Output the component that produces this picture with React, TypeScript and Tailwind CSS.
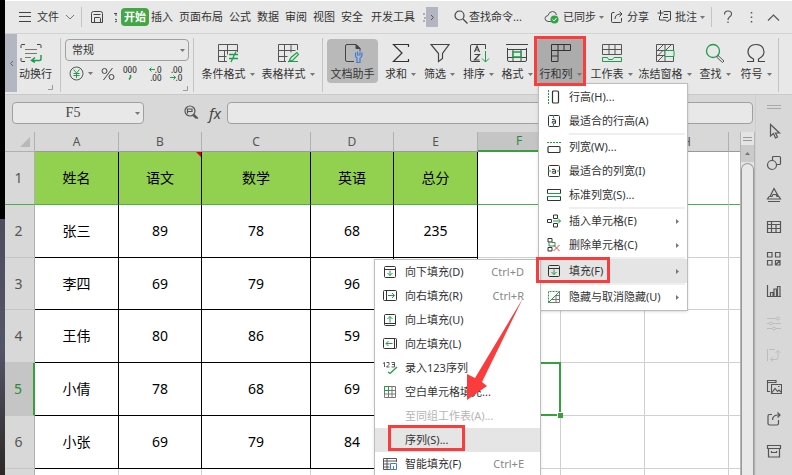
import { ReactNode } from 'react';

interface IconProps {
  children: ReactNode;
  w?: number;
  h?: number;
  className?: string;
}

// Stroke icon drawn one unit per pixel
function Icon({ children, w = 16, h = 16, className = '' }: IconProps) {
  return (
    <svg
      width={w}
      height={h}
      viewBox={`0 0 ${w} ${h}`}
      fill="none"
      stroke="currentColor"
      strokeWidth="1"
      className={`shrink-0 ${className}`}
      aria-hidden="true"
    >
      {children}
    </svg>
  );
}

const G = '#1e9e4a';

function Caret() {
  return (
    <svg width="5" height="3" viewBox="0 0 5 3" className="shrink-0 fill-[#777]" aria-hidden="true">
      <path d="M0 0h5L2.500 3z" />
    </svg>
  );
}

const icons = {
  wrap: (
    <Icon w={24} h={20} className="text-[#444]">
      <path d="M2 5V2.500q0-1 1-1h3M18 1.500h3q1 0 1 1V5M2 15v2.500q0 1 1 1h3" />
      <path d="M6 6.500h12M6 10.500h12M6 14.500h6" stroke="#777" />
      <path d="M22 12v4q0 1.500-1.500 1.500H13M16 14.500l-3.500 3 3.500 2" stroke={G} strokeWidth="1.500" />
    </Icon>
  ),
  condition: (
    <Icon w={22} h={20} className="text-[#555]">
      <path d="M10 18.500H1.500V1.500h19V9M1.500 7.500h19M10.500 1.500v10M1.500 13.500h8M7.500 7.500v11" />
      <path d="M12 11.500h9M12 15.500h9M19 8.500l-5 10.500" stroke={G} strokeWidth="1.300" />
    </Icon>
  ),
  tableStyle: (
    <Icon w={22} h={20} className="text-[#555]">
      <path d="M9 18.500H1.500V1.500h19V7M1.500 7.500h17M7.500 1.500v17M14 1.500v8M1.500 13.500h9" />
      <path d="M12 18.500l2-4 6-5 1.500 2-5.500 5.500zM11 18.500h10" stroke={G} strokeWidth="1.200" />
    </Icon>
  ),
  docHelper: (
    <Icon w={20} h={20} className="text-[#444]">
      <path d="M11 18.500H4Q2.500 18.500 2.500 17V3Q2.500 1.500 4 1.500h9l4 4V8" />
      <path d="M13 1.500v4h4z" fill="#444" />
      <path d="M12.500 9.500v3q0 1.500 1.500 2.500v4.500h3V15q2-1 2-3V9.500M14.500 8.500v3.500h2.500V8.500" stroke="#3f7bdc" strokeWidth="1.200" />
    </Icon>
  ),
  sum: (
    <Icon w={20} h={20} className="text-[#333]">
      <path d="M17.500 4V1.500H2.500L11 10l-8.500 8.500h15V16" strokeWidth="1.200" />
    </Icon>
  ),
  filter: (
    <Icon w={20} h={20} className="text-[#444]">
      <path d="M1 1.500h18l-6.500 9v5l-4 3v-8z" strokeWidth="1.200" />
    </Icon>
  ),
  sort: (
    <Icon w={22} h={20} className="text-[#444]">
      <path d="M12 18.500H4Q2.500 18.500 2.500 17V3Q2.500 1.500 4 1.500h13.500V6" />
      <path d="M6.500 9l2.500-6 2.500 6M7.500 7h3.500M6.500 11.500h5l-5 5.500h5" strokeWidth="1.200" />
      <path d="M17.500 8v11M14 15.500l3.500 3.500 3.500-3.500" stroke={G} />
    </Icon>
  ),
  format: (
    <Icon w={22} h={20} className="text-[#444]">
      <path d="M0 1.500h22M1.500 5v12q0 1.500 1.500 1.500h16q1.500 0 1.500-1.500V5M1.500 6.500h19M7 6v12.500M15 6v12.500M1.500 14.500h19" />
      <rect x="7" y="9" width="8" height="5" fill="#e8e8e8" stroke={G} strokeWidth="1.500" />
    </Icon>
  ),
  rowsCols: (
    <Icon w={20} h={20} className="text-[#333]">
      <path d="M.5 1.500h19v6H7v11H.5zM.5 7.500H7V1.500M.5 13h6.500M13 1.500v6" />
    </Icon>
  ),
  worksheet: (
    <Icon w={20} h={20} className="text-[#555]">
      <path d="M.5 11.500v-10h19v10zM.5 6.500h19M7 1.500v10M13 1.500v10" />
      <path d="M.5 14.500v4h19v-4H12l-1.500 2h-4l-1-2z" stroke={G} />
    </Icon>
  ),
  freeze: (
    <Icon w={20} h={20} className="text-[#555]">
      <path d="M1.500 1.500h17v17h-17zM1.500 7.500h17M1.500 12.500h17M10 1.500v17M3 7l5-5M11 7l5-5M3 12.500l5-5M3 18l5-5" />
      <path d="M10 7.500h9v6h-9z" fill="#e8e8e8" stroke={G} />
    </Icon>
  ),
  find: (
    <Icon w={20} h={20}>
      <circle cx="8" cy="8" r="6.500" stroke={G} strokeWidth="1.300" />
      <path d="M13 12.500l6 5.500-1.500 1.500-6-5.500z" stroke="#555" />
    </Icon>
  ),
  symbol: (
    <Icon w={20} h={20} className="text-[#444]">
      <path d="M1 18.500h6.500V16C3.500 14 2 12 2 9q.5-7.500 8-7.500T18 9c0 3-1.500 5-5.500 7v2.500H19" strokeWidth="1.200" />
    </Icon>
  ),
};

interface RibbonButtonProps {
  icon: ReactNode;
  label: string;
  className: string;
  caret?: boolean;
}

function RibbonButton({ icon, label, className, caret = true }: RibbonButtonProps) {
  return (
    <button className={`h-11 shrink-0 flex flex-col items-center gap-[3px] pt-1 rounded-sm ${className}`}>
      {icon}
      <span className="flex items-center gap-1 leading-4 whitespace-nowrap">
        {label}
        {caret && <Caret />}
      </span>
    </button>
  );
}

function Divider({ className = '' }: { className?: string }) {
  return <span className={`w-px shrink-0 bg-[#c4c4c4] ${className}`} />;
}

const tabs = ['插入', '页面布局', '公式', '数据', '审阅', '视图', '安全'];

function TabBar() {
  return (
    <div className="h-[34px] flex items-center border-t border-t-white border-b border-b-[#d2d2d2] pl-3.5 pr-3 whitespace-nowrap">
      <button className="flex items-center gap-1.5">
        <Icon w={12} h={12} className="text-[#444]">
          <path d="M0 1.500h12M0 5.500h12M0 10.500h12" />
        </Icon>
        文件
        <Icon w={10} h={8} className="text-[#777]">
          <path d="M1 2l4 4 4-4" />
        </Icon>
      </button>
      <Divider className="h-5 ml-1.5" />
      <button aria-label="保存" className="ml-2">
        <Icon w={14} h={14} className="text-[#444]">
          <path d="M1.500 12.500v-9q0-2 2-2h7q2 0 2 2v9zM3.500 4.500h7M4.500 12V7.500h5q1 0 1 1V12" />
        </Icon>
      </button>
      <Icon w={3} h={14} className="ml-2.5 text-[#444]">
        <path d="M0 3.500h3M2 4v2M1 9l2 1M1 12l2-1" />
      </Icon>
      <button className="ml-1 h-[18px] px-[3px] rounded bg-[#43a745] text-white font-bold leading-4">开始</button>
      <nav className="flex gap-1.5 ml-0.5">
        {tabs.map((tab) => (
          <button key={tab}>{tab}</button>
        ))}
        <button className="ml-0.5">开发工具</button>
      </nav>
      <Icon w={3} h={14} className="ml-2 text-[#777]">
        <path d="M0 4h2M1 8h2M0 11h2" />
      </Icon>
      <button aria-label="更多选项卡" className="w-3 h-5 bg-[#b3b6c0] flex items-center justify-center">
        <Icon w={5} h={7} className="text-[#555]">
          <path d="M1 1l2.500 2.500L1 6" />
        </Icon>
      </button>
      <button className="flex items-center gap-px ml-4">
        <Icon w={14} h={14} className="text-[#444]">
          <circle cx="5.500" cy="5.500" r="4.500" strokeWidth="1.200" />
          <path d="M9 9l4.500 4.500" strokeWidth="1.300" />
        </Icon>
        查找命令...
      </button>
      <div className="flex-1" />
      <button className="flex items-center gap-[3px]">
        <Icon w={16} h={14} className="text-[#555]">
          <path d="M7 11.500H4Q1 11 1 8.500 1 6 4 5.500 5 1.500 8.500 1.500q3.500 0 4 3.500" />
          <circle cx="10.500" cy="9.500" r="4" fill="#2fa644" stroke="none" />
          <path d="M8.500 9.500l1.500 1.500 2.500-3" stroke="#fff" />
        </Icon>
        已同步
        <Caret />
      </button>
      <button className="flex items-center gap-1 ml-1.5">
        <Icon w={13} h={13} className="text-[#444]">
          <path d="M4.500 1.500H3q-1.500 0-1.500 1.500v7.500q0 1 1 1h8q1 0 1-1V7M5 8q0-4.500 5-5h2M9.500.5L12 3 9.500 5.500" />
        </Icon>
        分享
      </button>
      <button className="flex items-center gap-[3px] ml-2">
        <Icon w={15} h={14} className="text-[#444]">
          <path d="M6.500 1.500h7v8.500h-2l-1 2-2-2h-6V6M7 4.500h4M6 7.500h5M3.500 0v6M.5 3h6" />
        </Icon>
        批注
        <Caret />
      </button>
      <Divider className="h-5 ml-1.5" />
      <button aria-label="帮助" className="ml-2.5">
        <Icon w={12} h={14} className="text-[#555]">
          <path d="M2.500 4.500Q2.500 1 6 1t3.500 3Q9.500 6 7.500 7 6 8 6 10M6 11.500V13" strokeWidth="1.200" />
        </Icon>
      </button>
      <button aria-label="更多" className="ml-4">
        <Icon w={3} h={13}>
          <path d="M1.500 1v1.500M1.500 5.500V7M1.500 10v1.500" stroke="#555" strokeWidth="1.500" />
        </Icon>
      </button>
      <button aria-label="收起功能区" className="ml-3.5">
        <Icon w={13} h={9} className="text-[#555]">
          <path d="M1 7.500L6.500 2 12 7.500" strokeWidth="1.200" />
        </Icon>
      </button>
    </div>
  );
}

function Corner() {
  return (
    <Icon w={6} h={6} className="self-end text-[#999]">
      <path d="M4.500 0v4.500H0" />
    </Icon>
  );
}

function NumberGroup() {
  return (
    <div className="w-[124px] shrink-0 flex flex-col ml-1 pt-[5px]">
      <div className="relative">
        <select
          aria-label="数字格式"
          className="appearance-none block w-full h-[22px] rounded border border-[#a0a0a0] bg-[#e8e8e8] pl-1.5 leading-4 outline-none"
        >
          <option>常规</option>
        </select>
        <span className="absolute right-1 top-2.5">
          <Caret />
        </span>
      </div>
      <div className="flex items-center h-[25px] pl-1">
        <button aria-label="货币格式" className="flex items-center gap-1">
          <Icon w={15} h={15} className="text-[#555]">
            <circle cx="7.500" cy="7.500" r="6.500" />
            <path d="M4.500 3.500l3 3.500 3-3.500M7.500 7v5M4.500 7.500h6M4.500 9.500h6" stroke={G} />
          </Icon>
          <Caret />
        </button>
        <button aria-label="百分比" className="ml-2">
          <Icon w={14} h={14} className="text-[#444]">
            <circle cx="3.500" cy="4" r="2.500" />
            <circle cx="10.500" cy="10" r="2.500" />
            <path d="M11.500 1l-9 12" />
          </Icon>
        </button>
        <button className="ml-2 flex flex-col items-center text-[8px] leading-2 font-medium">
          000
          <Icon w={4} h={7} className="text-[#1e9e4a]">
            <path d="M2.500 1v2.500L1 5.500" strokeWidth="1.500" />
          </Icon>
        </button>
        <button className="ml-3 flex flex-col items-end text-[8px] leading-2 font-medium">
          <span className="flex items-center">
            <Icon w={6} h={5} className="text-[#1e9e4a]">
              <path d="M0 2.500h6M2.500.5l-2 2 2 2" />
            </Icon>
            .0
          </span>
          <span>.00</span>
        </button>
        <button className="ml-2 flex flex-col items-end text-[8px] leading-2 font-medium">
          <span>.00</span>
          <span className="flex items-center">
            <Icon w={6} h={5} className="text-[#1e9e4a]">
              <path d="M0 2.500h6M3.500.5l2 2-2 2" />
            </Icon>
            .0
          </span>
        </button>
      </div>
      <Corner />
    </div>
  );
}

interface MenuEntry {
  label: string;
  icon?: ReactNode;
  shortcut?: string;
  arrow?: boolean;
  active?: boolean;
  disabled?: boolean;
}

const fillMenu: MenuEntry[] = [
  {
    label: '向下填充(D)',
    shortcut: 'Ctrl+D',
    icon: (
      <Icon w={14} h={14}>
        <rect x="1.500" y="1.500" width="11" height="11" rx="1" />
        <path d="M1.500 4.500h11" />
        <path d="M7 5.500v5M4.500 8L7 10.500 9.500 8" stroke={G} />
      </Icon>
    ),
  },
  {
    label: '向右填充(R)',
    shortcut: 'Ctrl+R',
    icon: (
      <Icon w={14} h={14}>
        <rect x=".5" y="1.500" width="13" height="10" rx="1" />
        <path d="M3.500 1.500v10" />
        <path d="M5 6.500h6.500M9 4l2.500 2.500L9 9" stroke={G} />
      </Icon>
    ),
  },
  {
    label: '向上填充(U)',
    icon: (
      <Icon w={14} h={14}>
        <rect x="1.500" y="1.500" width="11" height="11" rx="1" />
        <path d="M1.500 10.500h11" />
        <path d="M7 9.500v-6M4.500 6L7 3.500 9.500 6" stroke={G} />
      </Icon>
    ),
  },
  {
    label: '向左填充(L)',
    icon: (
      <Icon w={14} h={14}>
        <rect x=".5" y="1.500" width="13" height="10" rx="1" />
        <path d="M11.500 1.500v10" />
        <path d="M9.500 6.500H3M5.500 4L3 6.500 5.500 9" stroke={G} />
      </Icon>
    ),
  },
  {
    label: '录入123序列',
    icon: (
      <Icon w={16} h={14}>
        <path d="M0 2.500l1.500-1v4.500M3.500 1.500h2.500v2L3.500 6H6.500M8.500 1.500h3v4.500h-3M9 3.500h2.500" strokeWidth=".8" />
        <path d="M7 12.500l7-6.500M7 12.500l-2-1.500" stroke={G} strokeWidth="1.300" />
      </Icon>
    ),
  },
  {
    label: '空白单元格填充...',
    icon: (
      <Icon w={14} h={14} className="text-[#777]">
        <path d="M1.500 1.500h11v11h-11zM1.500 5.500h11M1.500 9h11M5.500 1.500v11M9 1.500v11" />
        <path d="M1.500 1.500h4v4h-4z" stroke={G} />
      </Icon>
    ),
  },
  { label: '至同组工作表(A)...', disabled: true },
  { label: '序列(S)...', active: true },
  {
    label: '智能填充(F)',
    shortcut: 'Ctrl+E',
    icon: (
      <Icon w={14} h={14} className="text-[#555]">
        <path d="M7 12.500H.5v-11h13V5M.5 4h13M.5 7h6M.5 10h6M4 1.500v11" />
        <path d="M7.500 6.500h6v6h-6zM10.500 9v3.500" stroke="#3f7bdc" />
      </Icon>
    ),
  },
];

const rowColMenu: MenuEntry[][] = [
  [
    {
      label: '行高(H)...',
      icon: (
        <Icon w={14} h={14}>
          <path d="M1.500 0v14" stroke={G} strokeDasharray="2 1" />
          <rect x="5.500" y="1" width="6" height="12" rx="1" strokeWidth="1.200" />
        </Icon>
      ),
    },
    {
      label: '最适合的行高(A)',
      icon: (
        <Icon w={14} h={14}>
          <rect x="1.500" y="1.500" width="11" height="11" rx="1" />
          <path d="M5 5.500q3.500-1 3.500 1V9.500M8.500 7q-4 0-3.500 1.500T8.500 9" />
          <path d="M6.500 1v3M6.500 10v3" stroke={G} />
        </Icon>
      ),
    },
  ],
  [
    {
      label: '列宽(W)...',
      icon: (
        <Icon w={14} h={14}>
          <path d="M0 2.500h14" stroke={G} strokeDasharray="2 1" />
          <rect x="1" y="6.500" width="12" height="6" rx="1" strokeWidth="1.200" />
        </Icon>
      ),
    },
    {
      label: '最适合的列宽(I)',
      icon: (
        <Icon w={14} h={14}>
          <rect x="1.500" y="1.500" width="11" height="11" rx="1" />
          <path d="M5 5.500q3.500-1 3.500 1V9.500M8.500 7q-4 0-3.500 1.500T8.500 9" />
          <path d="M1 7h3M10 7h3" stroke={G} />
        </Icon>
      ),
    },
    {
      label: '标准列宽(S)...',
      icon: (
        <Icon w={14} h={14}>
          <path d="M.5 5.500v-4h13v4M.5 8.500v4h13v-4" />
          <path d="M0 5.500h14M0 8.500h14" stroke={G} />
        </Icon>
      ),
    },
  ],
  [
    {
      label: '插入单元格(E)',
      arrow: true,
      icon: (
        <Icon w={14} h={14}>
          <path d="M.5 5.500h4v3h-4zM6.500 1h4v3.500h-4zM6.500 9.500h4V13h-4z" />
          <path d="M6 7h7.500M11 4.500L13.500 7 11 9.500" stroke={G} />
        </Icon>
      ),
    },
    {
      label: '删除单元格(C)',
      arrow: true,
      icon: (
        <Icon w={14} h={14}>
          <path d="M1 .5h4V4H1zM1 9.500h4V13H1z" />
          <path d="M2 4v4h6V4.500H5" stroke={G} />
          <path d="M6.500 7l6 6M12.500 7l-6 6" stroke="#e0443e" />
        </Icon>
      ),
    },
  ],
  [
    {
      label: '填充(F)',
      arrow: true,
      active: true,
      icon: (
        <Icon w={14} h={14}>
          <rect x="1.500" y="1.500" width="11" height="11" rx="1" />
          <path d="M1.500 4.500h11" />
          <path d="M7 5.500v5M4.500 8L7 10.500 9.500 8" stroke={G} />
        </Icon>
      ),
    },
  ],
  [
    {
      label: '隐藏与取消隐藏(U)',
      arrow: true,
      icon: (
        <Icon w={14} h={14} className="text-[#777]">
          <path d="M12.500 1.500v11h-11M9 12.500V5M4 9.500h8.500M8 5.500h4.500" />
          <path d="M1.500 12.500v-11h11" stroke={G} strokeDasharray="2 1" />
          <path d="M1.500 12.500l11-11" stroke={G} />
        </Icon>
      ),
    },
  ],
];

function MenuRow({ entry }: { entry: MenuEntry }) {
  return (
    <button
      disabled={entry.disabled}
      className={`w-full h-6 flex items-center pl-2 pr-2 text-left whitespace-nowrap ${
        entry.active ? 'bg-[#e5e5e5]' : ''
      } ${entry.disabled ? 'text-[#b5b5b5]' : 'text-[#333]'}`}
    >
      <span className="w-[22px] shrink-0">{entry.icon}</span>
      <span className="flex-1">{entry.label}</span>
      {entry.shortcut && <span className="pr-2 text-[#888]">{entry.shortcut}</span>}
      {entry.arrow && (
        <svg width="3" height="5" viewBox="0 0 3 5" className="fill-[#777]" aria-hidden="true">
          <path d="M0 0l3 2.500L0 5z" />
        </svg>
      )}
    </button>
  );
}

function RowColMenu() {
  return (
    <div className="absolute z-20 left-0.5 top-full w-[150px] bg-white border border-[#bdbdbd] shadow-sm py-px">
      {rowColMenu.map((group, i) => (
        <div key={i}>
          {i > 0 && <div className="h-0.5 ml-[30px] mr-0.5 bg-[#efefef]" />}
          {group.map((entry) => (
            <div key={entry.label} className="relative">
              <MenuRow entry={entry} />
              {entry.label.startsWith('填充') && <FillMenu />}
            </div>
          ))}
        </div>
      ))}
    </div>
  );
}

function FillMenu() {
  return (
    <div className="absolute top-0 -left-[165px] w-[167px] bg-white border border-[#bdbdbd] shadow-sm">
      {fillMenu.map((entry) => (
        <MenuRow key={entry.label} entry={entry} />
      ))}
    </div>
  );
}

function Ribbon() {
  return (
    <div className="h-[61px] flex border-b border-[#cacaca]">
      <button aria-label="向左滚动" className="w-3 h-[58px] shrink-0 bg-[#b3b7c2] flex items-center justify-center">
        <Icon w={5} h={7} className="text-[#666]">
          <path d="M4 1L1.500 3.500 4 6" />
        </Icon>
      </button>
      <div className="w-[43px] shrink-0 flex flex-col pt-[5px]">
        <button className="h-11 flex flex-col items-start gap-[3px] pt-1 pl-0.5">
          {icons.wrap}
          <span className="leading-4 whitespace-nowrap">动换行</span>
        </button>
        <span className="flex justify-end pr-1.5 pt-0.5">
          <Corner />
        </span>
      </div>
      <Divider className="h-[54px] mt-1" />
      <NumberGroup />
      <Divider className="h-[54px] mt-1 ml-1" />
      <div className="flex pt-[5px] ml-1">
        <RibbonButton icon={icons.condition} label="条件格式" className="w-[60px]" />
        <RibbonButton icon={icons.tableStyle} label="表格样式" className="w-[60px]" />
      </div>
      <Divider className="h-[54px] mt-1 ml-1" />
      <div className="flex pt-[5px] ml-1">
        <RibbonButton icon={icons.docHelper} label="文档助手" className="w-[51px] bg-[#b9b9b9]" caret={false} />
        <span className="w-[3px]" />
        <RibbonButton icon={icons.sum} label="求和" className="w-[39px]" />
        <RibbonButton icon={icons.filter} label="筛选" className="w-[39px]" />
        <RibbonButton icon={icons.sort} label="排序" className="w-[39px]" />
        <RibbonButton icon={icons.format} label="格式" className="w-[38px]" />
        <div className="relative h-11">
          <RibbonButton icon={icons.rowsCols} label="行和列" className="w-[49px] bg-[#acacac]" />
          <RowColMenu />
        </div>
        <RibbonButton icon={icons.worksheet} label="工作表" className="w-[53px]" />
        <RibbonButton icon={icons.freeze} label="冻结窗格" className="w-[54px]" />
        <RibbonButton icon={icons.find} label="查找" className="w-[46px]" />
        <RibbonButton icon={icons.symbol} label="符号" className="w-9" />
      </div>
      <Divider className="h-[54px] mt-1 ml-1" />
    </div>
  );
}

function FormulaBar() {
  return (
    <div className="h-[37px] flex items-center pl-[7px] pr-0.5 pt-0.5 pb-1">
      <div className="relative w-[132px] shrink-0">
        <input
          aria-label="名称框"
          defaultValue="F5"
          className="block w-full h-[22px] rounded border border-[#a0a0a0] bg-[#e8e8e8] pr-2.5 text-center text-sm leading-4 text-[#444] font-['Liberation_Serif','Noto_Sans_CJK_SC',serif] outline-none"
        />
        <span className="absolute right-1 top-2.5">
          <Caret />
        </span>
      </div>
      <button aria-label="浏览公式" className="ml-10">
        <Icon w={15} h={15} className="text-[#555]">
          <circle cx="6" cy="6" r="5" strokeWidth="1.200" />
          <path d="M3.500 8.500V4h4.500v2.500h-4M10 9.500l4 4M9 10.500l3.500 3" strokeWidth="1.200" />
        </Icon>
      </button>
      <button className="ml-2 w-4 text-[15px] leading-4 italic text-[#444]">fx</button>
      <input
        aria-label="编辑栏"
        className="ml-1 flex-1 min-w-0 h-[22px] rounded border border-[#a0a0a0] bg-[#e8e8e8] px-2 outline-none"
      />
    </div>
  );
}

const columns = ['A', 'B', 'C', 'D', 'E', 'F', '', 'H'];

const rows = [
  ['姓名', '语文', '数学', '英语', '总分'],
  ['张三', '89', '78', '68', '235'],
  ['李四', '69', '79', '96', ''],
  ['王伟', '80', '86', '59', ''],
  ['小倩', '78', '68', '69', ''],
  ['小张', '69', '79', '84', ''],
];

const rowHeights = ['h-[53px]', 'h-[53px]', 'h-[52px]', 'h-[53px]', 'h-[53px]', 'h-[53px]'];

function Sheet() {
  return (
    <table className="w-full table-fixed border-separate border-spacing-0 bg-white text-center text-sm leading-5 text-black">
      <colgroup>
        <col className="w-[30px]" />
        <col className="w-[84px]" />
        <col className="w-[83px]" />
        <col className="w-[109px]" />
        <col className="w-[83px]" />
        <col className="w-[84px]" />
        <col className="w-[83px]" />
        <col className="w-[84px]" />
        <col className="w-[84px]" />
        <col />
      </colgroup>
      <thead>
        <tr className="h-5 bg-[#d8d8d8] text-[#555]">
          <th className="p-0 border-r border-b border-[#b0b0b0]">
            <svg width="10" height="10" viewBox="0 0 10 10" className="ml-auto mr-1 fill-[#b8b8b8]" aria-hidden="true">
              <path d="M10 0v10H0z" />
            </svg>
          </th>
          {columns.map((col, i) => (
            <th
              key={i}
              className={`p-0 border-r border-r-[#b0b0b0] text-[12px] leading-4 font-normal ${
                col === 'F' ? 'bg-[#c5c5c5] text-[#2b8a3a] border-b-2 border-b-[#36a03a]' : 'border-b border-b-[#9a9a9a]'
              }`}
            >
              {col}
            </th>
          ))}
          <th className="p-0 border-b border-[#9a9a9a]" />
        </tr>
      </thead>
      <tbody>
        {rows.map((cells, r) => (
          <tr key={r} className={rowHeights[r]}>
            <th
              className={`p-0 pr-0.5 border-b font-normal ${r === 0 ? 'border-b-[#4cae4f]' : 'border-b-[#c4c4c4]'} ${
                r === 4
                  ? 'bg-[#c5c5c5] text-[#2b8a3a] border-r-2 border-r-[#36a03a]'
                  : 'bg-[#d8d8d8] text-[#555] border-r border-r-[#b0b0b0]'
              }`}
            >
              {r + 1}
            </th>
            {cells.map((cell, c) => (
              <td
                key={c}
                className={`relative p-0 border-r border-b border-r-black ${
                  r === 0 ? 'bg-[#92d050] border-b-[#4cae4f]' : 'border-b-black'
                }`}
              >
                {cell}
                {r === 0 && c === 1 && (
                  <svg width="5" height="5" viewBox="0 0 5 5" className="absolute right-0 top-0 fill-red-600" aria-hidden="true">
                    <path d="M0 0h5v5z" />
                  </svg>
                )}
              </td>
            ))}
            {['F', 'G', 'H', 'I'].map((col) => (
              <td
                key={col}
                className={`relative p-0 border-b ${r === 0 ? 'border-b-[#4cae4f]' : 'border-b-[#d0d0d0]'} ${
                  col === 'I' ? '' : 'border-r border-r-[#d0d0d0]'
                }`}
              >
                {r === 4 && col === 'F' && (
                  <span className="absolute z-10 -inset-px border-2 border-[#36a03a]">
                    <span className="absolute -right-1 -bottom-1 w-1.5 h-1.5 bg-[#36a03a] border-t border-l border-white" />
                  </span>
                )}
              </td>
            ))}
          </tr>
        ))}
        <tr className="h-[53px]">
          <th className="bg-[#d8d8d8] border-r border-[#b0b0b0]" />
          {columns.map((col, i) => (
            <td key={i} className="border-r border-[#d0d0d0]" />
          ))}
          <td />
        </tr>
      </tbody>
    </table>
  );
}

function ScrollBar() {
  return (
    <div className="w-[15px] shrink-0 flex flex-col bg-[#e4e4e4] border-l border-r border-[#b5b5b5]">
      <span className="h-[13px] flex justify-center items-center">
        <Icon w={9} h={4} className="text-[#999]">
          <path d="M0 .5h9M0 3.500h9" />
        </Icon>
      </span>
      <button aria-label="向上滚动" className="h-[17px] bg-[#cacaca] flex items-center justify-center">
        <svg width="5" height="3" viewBox="0 0 5 3" className="fill-[#777]" aria-hidden="true">
          <path d="M0 3h5L2.500 0z" />
        </svg>
      </button>
      <div className="flex-1 mt-px rounded-t-full border border-b-0 border-[#999] bg-[#e8e8e8]" />
    </div>
  );
}

const sideTools: { name: string; faded?: boolean; drawing: ReactNode }[] = [
  { name: '选择', drawing: <path d="M4.500 1.500v11.500l3-2.500 2 4.500 2-1-2-4h4z" strokeWidth="1.200" /> },
  {
    name: '形状',
    drawing: (
      <>
        <path d="M6.500 5V2.500q0-1 1-1h6q1 0 1 1v6q0 1-1 1H11" strokeWidth="1.200" />
        <circle cx="6" cy="10" r="4.500" strokeWidth="1.200" />
      </>
    ),
  },
  {
    name: '样式',
    drawing: <path d="M8 1.500L4 9.500h2l1-2h3l1 2h1.500zM7 7.500h2.500M3 9.500l-1.500 2.500h13L13 9.500M2 14.500h12" strokeWidth="1.200" />,
  },
  { name: '表格', drawing: <path d="M1.500 2.500h13v11h-13zM1.500 5.500h13M1.500 9.500h13M5.500 2.500v11M10 5.500v8" strokeWidth="1.200" /> },
  {
    name: '组件',
    drawing: <path d="M1.500 1.500h4.500V6H1.500zM9.500 1.500H14V6H9.500zM1.500 9.500h4.500V14H1.500zM9.500 9.500H14V14H9.500zM10 13.500l4-4" strokeWidth="1.200" />,
  },
  { name: '图表', drawing: <path d="M1.500 2v11.500H15M4.500 13V9.500H7V13M8 13V6h2.500v7M11.500 13V3.500H14V13" strokeWidth="1.200" /> },
  {
    name: '设置',
    faded: true,
    drawing: (
      <>
        <path d="M1 3.500h9M1 8.500h2M7 8.500h8M1 13.500h5M10 13.500h5" />
        <circle cx="12" cy="3.500" r="1.500" />
        <circle cx="5" cy="8.500" r="1.500" />
        <circle cx="8" cy="13.500" r="1.500" />
      </>
    ),
  },
  { name: '转换', faded: true, drawing: <path d="M1.500 2v12M3 2.500h6M5 12.500h5q2 0 2-2V4M9.500 6L12 3.500 14.500 6M7 10l-2.500 2.500L7 15" /> },
  {
    name: '图片',
    drawing: <path d="M4 12.500H1.500v-11H10V4M1.500 3.500H10M5.500 14.500v-9h10v9zM6 13.500l3-4 2.500 3 1.500-1.500 2 2M12 7.500h1.500" strokeWidth="1.100" />,
  },
  {
    name: '共享',
    drawing: <path d="M6 3.500H3.500Q2 3.500 2 5v7.500Q2 14 3.500 14H11q1.500 0 1.500-1.500V9M6.500 9q0-4.500 5-5H14M11.500 1.500L14 4l-2.500 2.500" strokeWidth="1.200" />,
  },
  { name: '备份', drawing: <path d="M1.500 2.500h13v3h-13zM2.500 5.500v8.500h11V5.500M5.500 8v1.500h5V8" strokeWidth="1.200" /> },
];

function SidePanel() {
  return (
    <aside className="w-[37px] shrink-0 flex flex-col items-center bg-[#d8d8d8] border-l border-[#cecece] pt-2.5">
      <Icon w={14} h={4} className="mb-1.5 text-[#aaa]">
        <path d="M0 .5h14M0 3.500h14" />
      </Icon>
      {sideTools.map((tool) => (
        <button
          key={tool.name}
          aria-label={tool.name}
          className={`h-8 shrink-0 flex items-center ${tool.faded ? 'text-[#bdbdbd]' : 'text-[#555]'}`}
        >
          <Icon>{tool.drawing}</Icon>
        </button>
      ))}
    </aside>
  );
}

function Annotations() {
  return (
    <div className="absolute inset-0 z-30 pointer-events-none">
      <span className="absolute left-[534px] top-9 w-[52px] h-[50px] border-3 border-[#fa3c3c]" />
      <span className="absolute left-[536px] top-[257px] w-[74px] h-[26px] border-3 border-[#fa3c3c]" />
      <span className="absolute left-[388px] top-[425px] w-[77px] h-[26px] border-3 border-[#fa3c3c]" />
      <svg width="60" height="106" viewBox="0 0 60 106" className="absolute left-[465px] top-[296px] fill-[#fa3c3c]" aria-hidden="true">
        <path d="M58 2L17 86l5 4L2 104V78l8 4z" />
      </svg>
    </div>
  );
}

export default function App() {
  return (
    <div className="relative h-screen overflow-hidden flex bg-[#e8e8e8] text-[11px] leading-4 text-[#333] font-['Noto_Sans','Noto_Sans_CJK_SC',sans-serif]">
      <div className="w-[5px] shrink-0 flex flex-col bg-black">
        <div className="flex-1 mt-[219px] bg-linear-to-b from-[#4c4c5e] via-[#55556a] to-[#2e2926]" />
      </div>
      <div className="flex-1 min-w-0 flex flex-col">
        <TabBar />
        <Ribbon />
        <div className="flex-1 min-h-0 flex">
          <div className="flex-1 min-w-0 flex flex-col bg-[#d8d8d8]">
            <FormulaBar />
            <div className="flex-1 min-h-0 flex">
              <div className="flex-1 min-w-0 overflow-hidden">
                <Sheet />
              </div>
              <ScrollBar />
            </div>
          </div>
          <SidePanel />
        </div>
      </div>
      <Annotations />
    </div>
  );
}
